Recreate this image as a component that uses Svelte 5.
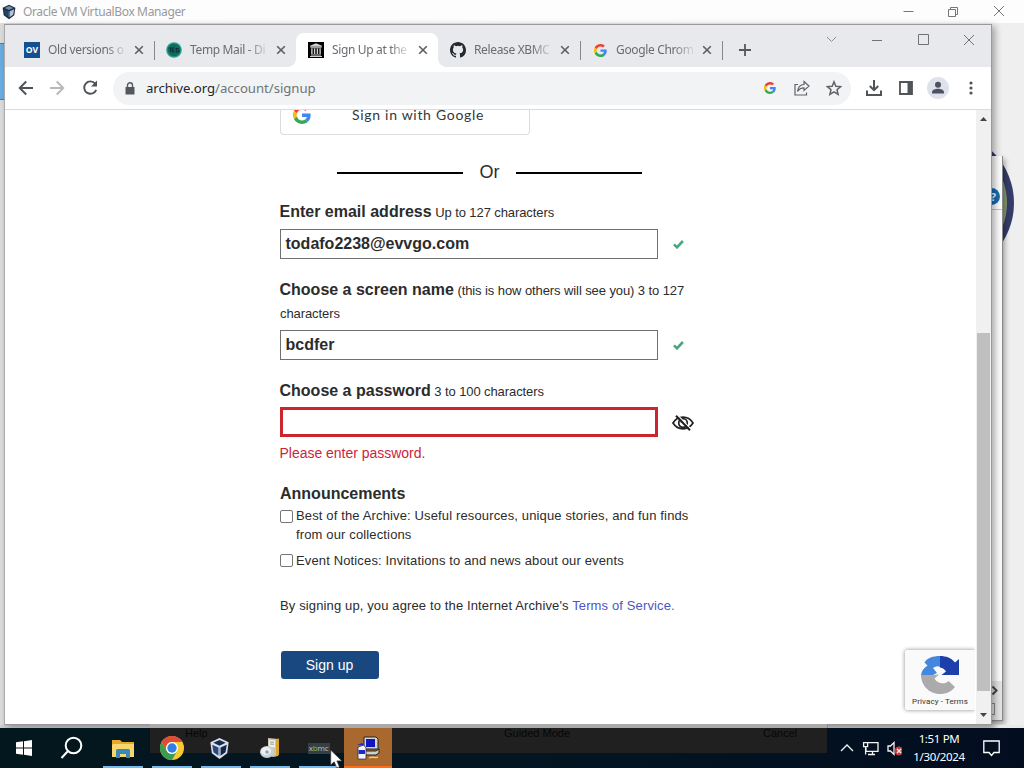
<script>
  const tabs = [
    { icon: 'ov', title: 'Old versions o', sep: true },
    { icon: 'temp', title: 'Temp Mail - Di', sep: false },
    { icon: 'archive', title: 'Sign Up at the', active: true },
    { icon: 'github', title: 'Release XBMC', sep: true },
    { icon: 'google', title: 'Google Chrom', sep: true }
  ];
</script>

{#snippet google(size)}
  <svg width={size} height={size} viewBox="0 0 48 48">
    <path fill="#ea4335" d="M24 9.5c3.5 0 6.700 1.200 9.200 3.600l6.900-6.900C35.900 2.400 30.500 0 24 0 14.600 0 6.500 5.400 2.600 13.200l8 6.200C12.400 13.700 17.700 9.500 24 9.500z" />
    <path fill="#4285f4" d="M47 24.600c0-1.600-.2-3.100-.4-4.600H24v9h12.900c-.6 3-2.200 5.500-4.700 7.200l7.700 6C44.400 38 47 31.800 47 24.600z" />
    <path fill="#fbbc05" d="M10.500 28.600a14.500 14.500 0 0 1 0-9.200l-8-6.200a24 24 0 0 0 0 21.600z" />
    <path fill="#34a853" d="M24 48c6.500 0 11.900-2.100 15.900-5.800l-7.700-6c-2.200 1.500-4.900 2.300-8.200 2.300-6.300 0-11.600-4.200-13.500-9.900l-8 6.200C6.500 42.600 14.600 48 24 48z" />
  </svg>
{/snippet}

{#snippet cube(size, onDark)}
  <svg width={size} height={size} viewBox="0 0 24 24">
    <path d="M12 1l9.500 4.500L20 17l-8 6-8-6L2.500 5.500z" fill={onDark ? '#dbe2ee' : '#1b2b40'} />
    <path d="M12 3l6.500 3L12 9 5.500 6z" fill={onDark ? '#172b50' : '#6f8dac'} />
    <path d="M4.400 8l6.500 3v8.500L5.700 16z" fill={onDark ? '#29477c' : '#1d4470'} />
    <path d="M19.600 8l-6.500 3v8.500l5.200-3.500z" fill={onDark ? '#12264b' : '#b6c5d5'} />
    <path d="M12 11v9" stroke="#8fa9c6" stroke-width="1" />
  </svg>
{/snippet}

{#snippet favicon(name)}
  {#if name === 'ov'}
    <span class="ov">OV</span>
  {:else if name === 'temp'}
    <svg width="16" height="16" viewBox="0 0 16 16">
      <circle cx="8" cy="8" r="7.800" fill="#22a98c" />
      <circle cx="8" cy="8" r="6.500" fill="#15695f" />
      <path d="M3 6h3M4.500 6v4M8.500 6H6.300v4h2.200M6.300 8h1.900M12.800 6.500H10.200V10h2.600V8.300h-1" stroke="#0a3439" stroke-width="1.100" fill="none" />
    </svg>
  {:else if name === 'archive'}
    <svg width="16" height="16" viewBox="0 0 16 16">
      <path d="M0 0h16v16H0z" fill="#000" />
      <path d="M8 1.200l6 2.500v1H2v-1zM2.500 5.200h11v1h-11zM3 12.400h10v1H3zM2 14h12v1H2z" fill="#d0d0d0" />
      <path d="M3.900 6.600v5.500M6.600 6.600v5.500M9.400 6.600v5.500M12.100 6.600v5.500" stroke="#d0d0d0" stroke-width="1.400" />
    </svg>
  {:else if name === 'github'}
    <svg width="16" height="16" viewBox="0 0 16 16" fill="#24292f">
      <path d="M8 0C3.580 0 0 3.580 0 8c0 3.540 2.290 6.530 5.470 7.590.4.070.55-.17.55-.38 0-.19-.010-.82-.010-1.490-2.010.37-2.530-.49-2.690-.94-.09-.23-.48-.94-.82-1.130-.28-.15-.68-.52-.010-.53.63-.010 1.080.58 1.230.82.72 1.210 1.870.87 2.330.66.070-.52.28-.87.51-1.070-1.780-.2-3.640-.89-3.640-3.950 0-.87.31-1.590.82-2.150-.08-.2-.36-1.020.08-2.120 0 0 .67-.21 2.200.82a7.600 7.600 0 0 1 4 0c1.530-1.040 2.200-.82 2.200-.82.44 1.100.16 1.920.08 2.120.51.56.82 1.270.82 2.150 0 3.070-1.870 3.750-3.650 3.950.29.25.54.73.54 1.480 0 1.070-.010 1.930-.010 2.200 0 .21.150.46.55.38A8.010 8.010 0 0 0 16 8c0-4.420-3.580-8-8-8z" />
    </svg>
  {:else}
    {@render google(13)}
  {/if}
{/snippet}

{#snippet tick()}
  <svg class="tick" width="11" height="9" viewBox="0 0 11 9"><path d="M1 4.300l3 3L9.900 1" fill="none" stroke="#4aa57c" stroke-width="2.600" /></svg>
{/snippet}

<div class="desktop">
  <div class="vbox">
    <header class="vbox-title">
      {@render cube(16, false)}
      <span class="vbox-name">Oracle VM VirtualBox Manager</span>
      <svg class="vbox-buttons" width="106" height="14" viewBox="0 0 106 14" fill="none" stroke="#777" stroke-width="1">
        <path d="M.5 7.500h10M45.500 5.500h7v7h-7zM47.500 5.500v-2h7v7h-2M91 2l10 10M101 2L91 12" />
      </svg>
    </header>
    <div class="vbox-body"><div class="vbox-selection"></div></div>
  </div>

  <svg class="emblem" width="44" height="140" viewBox="0 0 44 140">
    <ellipse cx="-30" cy="70" rx="67" ry="70" fill="#353c68" />
    <ellipse cx="-30" cy="70" rx="60" ry="63" fill="#8a9b70" />
    <ellipse cx="-30" cy="70" rx="52" ry="54" fill="#5f6a60" />
  </svg>
  <div class="wizard">
    <span class="help-ball">?</span>
    <div class="wizard-rule"></div>
    <div class="wizard-end"><svg width="9" height="11" viewBox="0 0 9 11"><path d="M1.500 1.500l4 4-4 4" fill="none" stroke="#444" stroke-width="2" /></svg><span class="wizard-box"></span></div>
  </div>
  <div class="ledge"></div>

  <section class="browser">
    <div class="tabstrip">
      {#each tabs as tab}
        <div class="tab" class:active={tab.active} class:sep={tab.sep}>
          <span class="favicon">{@render favicon(tab.icon)}</span>
          <span class="tab-title">{tab.title}</span>
          <svg class="close" width="10" height="10" viewBox="0 0 10 10"><path d="M1.200 1.200l7.600 7.600M8.800 1.200L1.200 8.800" stroke="#5b5e62" stroke-width="1.600" /></svg>
        </div>
      {/each}
      <svg class="plus" width="12" height="12" viewBox="0 0 12 12"><path d="M6 0v12M0 6h12" stroke="#55585c" stroke-width="1.800" /></svg>
      <svg class="win-buttons" width="150" height="14" viewBox="0 0 150 14" fill="none" stroke="#707276">
        <path d="M1 5l4.500 4.500L10 5" stroke="#8d8f93" />
        <path d="M46 8.500h10M92.500 2.500h10v10h-10zM138 3l10 10M148 3l-10 10" />
      </svg>
    </div>

    <div class="toolbar">
      <svg class="nav" width="80" height="20" viewBox="0 0 80 20" fill="none" stroke-width="1.900">
        <path d="M15 10H2M8.200 3.500L1.700 10l6.500 6.500" stroke="#4f5256" />
        <path d="M32 10h13M38.800 3.500l6.500 6.500-6.500 6.500" stroke="#b6b8bb" />
        <path d="M77.200 5.600A6.200 6.200 0 1 0 78.200 11.800" stroke="#4f5256" />
        <path d="M79 2.500v6h-6z" fill="#4f5256" />
      </svg>
      <div class="omnibox">
        <svg class="lock" width="10" height="13" viewBox="0 0 10 13"><path d="M.5 5h9v7.500h-9z" fill="#55585c" /><path d="M2.500 5V3.300a2.500 2.500 0 0 1 5 0V5" fill="none" stroke="#55585c" stroke-width="1.400" /></svg>
        <span class="url">archive.org<span>/account/signup</span></span>
        {@render google(12)}
        <svg class="share" width="16" height="16" viewBox="0 0 16 16" fill="none" stroke="#5f6368" stroke-width="1.200"><path d="M4 4.500H1V15h11.500v-2.500M10 1.500l5 4.600-5 4.400V7.800C7 7.800 5 9 3.500 11.500 4 7.500 6.500 4.700 10 4.500z" /></svg>
        <svg width="16" height="16" viewBox="0 0 16 16" fill="none" stroke="#5f6368" stroke-width="1.500"><path d="M8 1.800l1.800 4.400 4.800.4-3.600 3.100 1.100 4.600L8 11.800l-4.100 2.500L5 9.700 1.400 6.600l4.800-.4z" /></svg>
      </div>
      <svg class="download" width="18" height="18" viewBox="0 0 18 18" fill="none" stroke="#505357" stroke-width="2"><path d="M9 1v10M4.800 7L9 11.200 13.200 7M2 11.500V16h14v-4.500" /></svg>
      <svg class="side" width="14" height="14" viewBox="0 0 14 14"><path d="M1 1h12v12H1z" fill="none" stroke="#505357" stroke-width="1.800" /><path d="M8.500 1H13v12H8.500z" fill="#505357" /></svg>
      <svg class="avatar" width="22" height="22" viewBox="0 0 22 22"><circle cx="11" cy="11" r="11" fill="#dfe2ea" /><circle cx="11" cy="7.800" r="3" fill="#4c5263" /><path d="M5 16.500v-1.300c0-2.300 3.500-3.400 6-3.400s6 1.100 6 3.400v1.300z" fill="#4c5263" /></svg>
      <svg class="dots" width="4" height="14" viewBox="0 0 4 14" fill="#505357"><circle cx="2" cy="2" r="1.600" /><circle cx="2" cy="7" r="1.600" /><circle cx="2" cy="12" r="1.600" /></svg>
    </div>

    <div class="viewport">
      <main class="page">
        <div class="google-signin">{@render google(18)}<span>Sign in with Google</span></div>
        <div class="or"><i></i><span>Or</span><i></i></div>

        <div class="label l1"><b>Enter email address</b> <small>Up to 127 characters</small></div>
        <div class="row"><div class="input">todafo2238@evvgo.com</div>{@render tick()}</div>

        <div class="label l2"><b>Choose a screen name</b> <small>(this is how others will see you) 3 to 127<br />characters</small></div>
        <div class="row"><div class="input">bcdfer</div>{@render tick()}</div>

        <div class="label l3"><b>Choose a password</b> <small>3 to 100 characters</small></div>
        <div class="row">
          <div class="input invalid"></div>
          <svg class="eye" width="22" height="16" viewBox="0 0 22 16" fill="none" stroke="#222">
            <path d="M1 8C3.500 4 7 2.200 11 2.200S18.500 4 21 8c-2.500 4-6 5.800-10 5.800S3.500 12 1 8z" stroke-width="1.700" />
            <circle cx="11" cy="8" r="4.300" stroke-width="1.700" />
            <path d="M9 7.300A2 2 0 0 1 11 5.700" stroke-width="1.200" />
            <path d="M5.500 0L19 14.200" stroke="#fff" stroke-width="1.200" />
            <path d="M4 .8l14 14.500" stroke-width="2" />
          </svg>
        </div>
        <div class="error">Please enter password.</div>

        <h3>Announcements</h3>
        <div class="check"><span class="box"></span><span class="best">Best of the Archive: Useful resources, unique stories, and fun finds<br />from our collections</span></div>
        <div class="check second"><span class="box"></span><span class="event">Event Notices: Invitations to and news about our events</span></div>
        <p class="terms">By signing up, you agree to the Internet Archive's <span>Terms of Service.</span></p>
        <div class="signup">Sign up</div>
      </main>
      <div class="scrollbar">
        <svg width="7" height="4" viewBox="0 0 7 4"><path d="M3.500 0L7 4H0z" fill="#444" /></svg>
        <div class="thumb"></div>
        <svg width="7" height="4" viewBox="0 0 7 4"><path d="M3.500 4L0 0h7z" fill="#444" /></svg>
      </div>
      <div class="recaptcha">
        <svg width="38" height="38" viewBox="0 0 38 38">
          <path d="M0 19h12l4-2-4-5q4-3 7-1V0C12 0 6 2 3.500 6.500L6.500 9.500Q1 13 0 19z" fill="#4587dd" />
          <path d="M19 0v11.500q4 .5 6 4L20.500 19H38V3l-4 3.500C30.500 2 25 0 19 0z" fill="#1c3fab" />
          <path d="M0 19c0 10 8 19 19 19 6.500 0 11.500-2.500 15-7l-6.500-6c-2 2.200-5 2.800-8 2-3-.7-5-2.500-6-4.500L18 18.500 12 19z" fill="#ababab" />
        </svg>
        <span>Privacy - Terms</span>
      </div>
    </div>
  </section>

  <footer class="taskbar">
    <div class="ghost"><span class="g1">Help</span><span class="g2">Guided Mode</span><span class="g3">Cancel</span></div>
    <div class="task plain"><svg width="16" height="16" viewBox="0 0 16 16" fill="#fff"><path d="M0 2.300l7-1v6.200H0zM8 1.200L16 0v7.500H8zM0 8.500h7v6.200l-7-1zM8 8.500h8V16l-8-1.200z" /></svg></div>
    <div class="task plain"><svg width="24" height="24" viewBox="0 0 24 24" fill="none" stroke="#fff" stroke-width="2"><circle cx="13.500" cy="9.500" r="7.800" /><path d="M8 15l-6.500 7" /></svg></div>
    <div class="task folder"><svg width="22" height="19" viewBox="0 0 22 19"><path d="M0 1h8l2 2h12v15H0z" fill="#e4a82b" /><path d="M1 5h21v13H0V6z" fill="#f8d66d" /><path d="M4 11.500q0-1.500 1.500-1.500h11q1.500 0 1.500 1.500V19h-4v-4H8v4H4z" fill="#3989b8" /></svg></div>
    <div class="task"><svg width="24" height="24" viewBox="0 0 24 24"><circle cx="12" cy="12" r="12" fill="#f8ca32" /><path d="M1.600 6A12 12 0 0 1 22.400 6H12a6 6 0 0 0-5.200 9z" fill="#df4b3b" /><path d="M1.600 6A12 12 0 0 0 12 24l5.200-9a6 6 0 0 1-10.400 0z" fill="#3b9c52" /><circle cx="12" cy="12" r="6" fill="#fff" /><circle cx="12" cy="12" r="4.700" fill="#317ee6" /></svg></div>
    <div class="task box-app">{@render cube(23, true)}</div>
    <div class="task"><svg width="22" height="22" viewBox="0 0 22 22"><path d="M9 1l10 1v17l-5 1-5-2z" fill="#cfc8a7" /><path d="M17 2l3-.5V18l-3 1z" fill="#dba531" /><path d="M10 3l6 .5v7l-6-1z" fill="#edf0ee" /><path d="M11 5l4 .3M11 7l4 .3" stroke="#8ca0a0" /><ellipse cx="8" cy="15" rx="7" ry="6" fill="#c7d0d6" /><ellipse cx="7" cy="14" rx="5" ry="4" fill="#edf0f2" /><circle cx="8" cy="15" r="1.700" fill="#8da0b0" /></svg></div>
    <div class="task"><span class="xbmc">x<em>b</em>mc</span></div>
    <div class="task hot"><svg width="24" height="24" viewBox="0 0 24 24"><path d="M8 1h12l2 2v10H8z" fill="#d6d6d2" stroke="#222" /><path d="M10 3h9v8h-9z" fill="#1115c4" /><path d="M7 15h13l3-2v4l-3 2H7z" fill="#cfcfca" stroke="#222" /><path d="M2 11l6-2 2 3v11H2z" fill="#f4f4f4" stroke="#222" stroke-width=".7" /><path d="M2.500 14H9v4H2.500zM1 9l5-2 2 2z" fill="#2028c8" /><path d="M13 22c3-2.500 6 1 9-1" stroke="#e8d35b" stroke-width="1.500" fill="none" /></svg></div>
    <div class="tray">
      <svg width="62" height="20" viewBox="0 0 62 20" fill="none" stroke="#f4f4f4" stroke-width="1.300">
        <path d="M1 13l6-6 6 6" /><path d="M28 4.600h10v8.800H26V10M23.600 4.600h4v4h-4zM25.600 8.600v8M28 16.500h7M32.500 13.500v3" />
        <path d="M48 8h2.500L54 4.500v12L50.500 13H48z" />
        <circle cx="59" cy="13" r="4.500" fill="#c8393c" stroke="none" /><path d="M57 11l4 4M61 11l-4 4" />
      </svg>
      <div class="clock"><span>1:51 PM</span><span>1/30/2024</span></div>
      <svg class="note" width="17" height="17" viewBox="0 0 17 17" fill="none" stroke="#fff" stroke-width="1.300"><path d="M.8 1h15.400v11.500H11l-2.500 3-2.500-3H.8z" /></svg>
    </div>
  </footer>

  <svg class="cursor" width="13" height="20" viewBox="0 0 13 20"><path d="M.7 1v15l3.500-3.200 2.500 6 2.700-1.100-2.500-5.800h5z" fill="#fff" stroke="#333" stroke-width=".7" /></svg>
</div>

<style>
  :global(body) { overflow: hidden; }
  .desktop { position: relative; width: 1024px; height: 768px; overflow: hidden; background: #ededed; font-family: "Noto Sans", sans-serif; }
  .desktop :global(svg) { display: block; flex: none; }
  .vbox { height: 728px; display: flex; flex-direction: column; }
  .vbox-title { height: 23px; box-sizing: border-box; padding-left: 1px; display: flex; align-items: center; background: #fdfdfd; }
  .vbox-name { margin-left: 6px; font-size: 12px; line-height: 20px; color: #999; letter-spacing: -.37px; white-space: nowrap; flex: 1; }
  .vbox-buttons { margin: 0 15px 2px 0; }
  .vbox-body { flex: 1; padding-top: 20px; background: linear-gradient(90deg, #dcdcdc, #ededed 50%, #efefef); }
  .vbox-selection { width: 4px; height: 55px; background: #6aaee3; border-top: 1px solid #2785cc; border-bottom: 1px solid #2785cc; }
  .emblem { position: absolute; left: 977px; top: 133px; }
  .wizard { position: absolute; left: 980px; top: 156px; width: 23px; height: 565px; box-sizing: border-box; background: #fdfdfd; border-right: 1px solid #888; border-bottom: 1px solid #888; box-shadow: 2px 3px 5px #0005; display: flex; flex-direction: column; padding-top: 32px; }
  .help-ball { margin-left: 3px; width: 17px; height: 17px; border-radius: 50%; background: #136db7; color: #fff; text-align: right; box-sizing: border-box; padding-right: 4px; font: bold 11px/17px "Open Sans", sans-serif; }
  .wizard-rule { margin-top: 4px; height: 1px; background: #c8c8b8; }
  .wizard-end { margin-top: auto; height: 39px; padding: 4px 0 0 11px; box-sizing: border-box; background: #e5e5e5; }
  .wizard-box { display: block; width: 3px; height: 10px; border: 1px solid #888; border-left: 0; margin-top: 7px; }
  .ledge { position: absolute; left: 0; top: 725px; width: 1024px; height: 3px; background: linear-gradient(90deg, #ccc 0 150px, #aaa 150px 828px, #ccc 828px 990px, #e9e9e9 1000px); }

  .browser { position: absolute; left: 4px; top: 24px; width: 988px; height: 701px; box-sizing: border-box; border: 1px solid #999; border-left-color: #aaa; background: #fff; box-shadow: 3px 2px 7px #0005; display: flex; flex-direction: column; }
  .tabstrip { height: 42px; flex: none; display: flex; align-items: flex-end; padding-left: 7px; background: #e8e9ec; }
  .tab { position: relative; width: 142px; height: 34px; box-sizing: border-box; display: flex; align-items: center; padding-left: 12px; }
  .tab.sep::after { content: ""; position: absolute; right: -1px; top: 8px; width: 1px; height: 19px; background: #85888c; }
  .active { background: #fff; border-radius: 8px 8px 0 0; }
  .active::before, .active::after { content: ""; position: absolute; bottom: 0; width: 8px; height: 8px; }
  .active::before { left: -8px; background: radial-gradient(circle at 0 0, #0000 7.500px, #fff 8px); }
  .active::after { right: -8px; background: radial-gradient(circle at 100% 0, #0000 7.500px, #fff 8px); }
  .favicon { width: 16px; height: 16px; display: flex; align-items: center; justify-content: center; }
  .ov { width: 16px; height: 16px; background: #145090; color: #fff; font: bold 8.500px/15px "Open Sans", sans-serif; text-align: center; }
  .tab-title { width: 82px; margin-left: 8px; white-space: nowrap; font-size: 12px; line-height: 18px; color: #6a6c70; letter-spacing: -.35px; -webkit-mask-image: linear-gradient(90deg, #000 58px, transparent 80px); }
  .close { margin-left: 4px; }
  .plus { margin: 0 0 11px 17px; }
  .win-buttons { margin: 0 15px 21px auto; }
  .toolbar { height: 43px; flex: none; box-sizing: border-box; border-bottom: 1px solid #dadbdd; display: flex; align-items: center; background: #fff; }
  .nav { margin-left: 13px; }
  .omnibox { margin-left: 15px; width: 738px; height: 33px; border-radius: 17px; background: #f1f3f4; display: flex; align-items: center; box-sizing: border-box; padding: 0 9px 0 12px; }
  .url { margin-left: 11px; flex: 1; color: #24262a; font-size: 13.200px; line-height: 22px; letter-spacing: -.04px; }
  .url span { color: #707377; }
  .share { margin: 0 16px 0 18px; }
  .download { margin-left: 14px; }
  .side { margin-left: 16px; }
  .avatar { margin-left: 14px; }
  .dots { margin-left: 20px; }

  .viewport { position: relative; flex: 1; min-height: 0; display: flex; overflow: hidden; }
  .page { flex: 1; padding-left: 275px; font-family: "Liberation Sans", sans-serif; color: #2c2c2c; font-size: 13px; }
  .google-signin { height: 25px; width: 250px; box-sizing: border-box; border: 1px solid #dadce0; border-top: 0; border-radius: 0 0 4px 4px; display: flex; align-items: flex-start; padding-left: 12px; overflow: hidden; }
  .google-signin :global(svg) { margin-top: -4px; }
  .google-signin span { margin: -4px 0 0 41px; font: 400 14px/18px Lato, sans-serif; letter-spacing: .7px; color: #34373b; white-space: nowrap; }
  .or { display: flex; align-items: center; width: 305px; height: 22px; margin: 26px 0 0 57px; justify-content: space-between; font-size: 18px; line-height: 22px; }
  .or i { width: 126px; height: 2px; background: #000; margin-top: 2px; }
  .label { line-height: 23px; white-space: nowrap; }
  .label b { font-size: 16px; margin-left: -.5px; }
  .label small { font-size: 13px; letter-spacing: -.09px; }
  .l1 { margin-top: 17px; }
  .l2, .l3 { margin-top: 19px; }
  .row { display: flex; align-items: center; margin-top: 5px; height: 30px; }
  .l3 + .row { margin-top: 4px; }
  .input { width: 378px; height: 30px; box-sizing: border-box; border: 1px solid #707070; padding-left: 4.500px; font-weight: bold; font-size: 16px; line-height: 27px; }
  .input.invalid { border: 3px solid #cb252e; }
  .tick { margin-left: 15px; }
  .eye { margin: 2px 0 0 14px; }
  .error { margin-top: 7px; color: #cb253b; font-size: 14px; line-height: 18px; letter-spacing: -.02px; margin-left: -.5px; }
  h3 { margin: 22px 0 0; font-size: 16px; line-height: 20px; }
  .check { display: flex; margin-top: 2px; line-height: 19px; white-space: nowrap; letter-spacing: .14px; }
  .second { margin-top: 7px; }
  .box { width: 13px; height: 13px; margin: 4px 3px 0 0; box-sizing: border-box; border: 1px solid #767676; border-radius: 2px; }
  .second .box { margin-top: 3px; }
  .terms { margin: 26px 0 0; line-height: 19px; letter-spacing: .13px; }
  .terms span { color: #4b55c8; }
  .signup { margin: 36px 0 0 1px; width: 98px; height: 28px; border-radius: 3px; background: #194880; color: #fff; text-align: center; font-size: 14px; line-height: 28px; text-indent: -1px; }
  .scrollbar { width: 15px; display: flex; flex-direction: column; align-items: center; background: #f0f0f0; padding: 7px 0; box-sizing: border-box; }
  .thumb { width: 13px; height: 358px; margin: auto 0 22px; background: #bfbfbf; }
  .recaptcha { position: absolute; left: 900px; top: 540px; width: 70px; height: 60px; background: #fafafa; box-shadow: 0 0 4px #888; clip-path: inset(-5px 0 -5px -5px); border-radius: 2px 0 0 2px; display: flex; flex-direction: column; align-items: center; padding-top: 6px; box-sizing: border-box; }
  .recaptcha span { font: 8px/12px Roboto, sans-serif; letter-spacing: .1px; color: #333; margin-top: 2px; white-space: nowrap; }

  .taskbar { position: absolute; left: 0; top: 728px; width: 1024px; height: 40px; display: flex; background: linear-gradient(90deg, #03171e, #031622 50%, #020d20); }
  .ghost { position: absolute; left: 150px; top: -4px; width: 677px; height: 29px; background: linear-gradient(#aaa 0 4px, #202020 4px); font: 11px/18px "Liberation Sans", sans-serif; color: #070707; }
  .ghost span { position: absolute; top: 0; }
  .ghost .g1 { left: 35px; }
  .ghost .g2 { left: 354px; }
  .ghost .g3 { left: 613px; }
  .task { position: relative; width: 49px; height: 40px; display: flex; align-items: center; justify-content: center; }
  .task::after { content: ""; position: absolute; left: 5px; bottom: 0; width: 40px; height: 2px; background: #76b9ed; }
  .plain { width: 48px; }
  .plain::after { display: none; }
  .folder { margin-left: 2px; }
  .box-app { padding-right: 3px; box-sizing: border-box; }
  .hot { width: 48px; margin-left: 1px; background: #a9682e; }
  .hot::after { left: 0; width: 48px; background: #ff6d16; }
  .xbmc { width: 22px; height: 11px; background: #344046; color: #b9c0c3; font: 8px/10px "Open Sans", sans-serif; text-align: center; letter-spacing: -.2px; }
  .xbmc em { font-style: normal; color: #83bb35; }
  .tray { position: relative; margin-left: auto; padding-right: 24px; display: flex; align-items: center; color: #fff; }
  .clock { width: 62px; margin-left: 6px; margin-right: 13px; display: flex; flex-direction: column; align-items: center; font-size: 11.500px; line-height: 18px; letter-spacing: -.35px; }
  .cursor { position: absolute; left: 330px; top: 749px; }
</style>
